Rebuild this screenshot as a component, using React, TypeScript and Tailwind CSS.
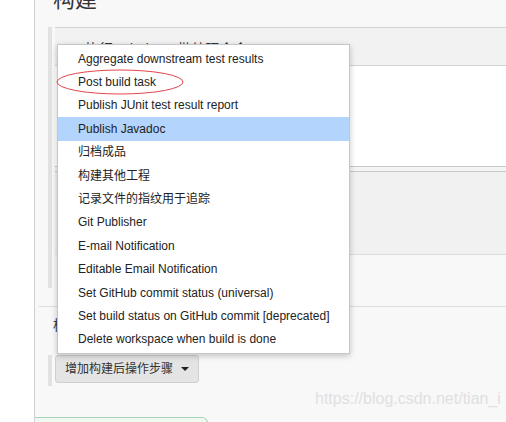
const items = [
  "Aggregate downstream test results",
  "Post build task",
  "Publish JUnit test result report",
  "Publish Javadoc",
  "归档成品",
  "构建其他工程",
  "记录文件的指纹用于追踪",
  "Git Publisher",
  "E-mail Notification",
  "Editable Email Notification",
  "Set GitHub commit status (universal)",
  "Set build status on GitHub commit [deprecated]",
  "Delete workspace when build is done",
]

const font = "font-['Liberation_Sans',Arial,'Noto_Sans_CJK_SC',sans-serif]"

function DragHandle() {
  return (
    <svg width="11" height="7" viewBox="0 0 11 7" className="shrink-0">
      {[0, 1, 2].map((r) =>
        [0, 1, 2, 3, 4].map((c) => (
          <rect key={`${r}-${c}`} x={c * 2 + 1} y={r * 2 + 1} width="1" height="1" fill="#c8c8c8" />
        ))
      )}
    </svg>
  )
}

export default function App() {
  return (
    <div className={`relative w-[506px] h-[422px] overflow-hidden flex bg-white ${font}`}>
      {/* left gutter */}
      <div className="w-[34px] shrink-0 bg-white" />

      {/* main area */}
      <div className="flex-1 border-l border-[#d0d0d0] bg-[#f8f8f8]">
        {/* title */}
        <div className="h-[27px] pl-[18px] overflow-hidden">
          <div className="mt-[-11px] text-[22px] leading-none text-[#333]">构建</div>
        </div>

        {/* build step */}
        <div className="flex h-[261px]">
          <div className="ml-[13px] w-[4px] bg-[#e2e2e2]" />
          <div className="ml-[3px] flex-1 flex flex-col">
            <div className="h-[39px] shrink-0 flex items-center gap-[7px] pl-[12px] bg-[#f2f2f2] border-t border-b border-[#d2d2d2]">
              <DragHandle />
              <span className="text-[14px] text-[#333] mt-[5px]">执行 Windows 批处理命令</span>
            </div>
            <div className="h-[100px] shrink-0 bg-white" />
            <div className="h-[6px] shrink-0 border-t border-b border-[#c8c8c8] bg-[#f5f5f5]" />
            <div className="h-[83px] shrink-0 bg-[#f1f1f1] border-b border-[#dcdcdc]" />
            <div className="flex-1" />
          </div>
        </div>

        <div className="h-[18px]" />
        <div className="ml-[4px] border-t border-[#dddddd]" />

        {/* post build section */}
        <div className="pl-[18px] pt-[8px] h-[48px] text-[14px] text-[#333]">构建后操作</div>

        <div className="flex items-stretch h-[31px]">
          <div className="ml-[13px] w-[4px] bg-[#e2e2e2]" />
          <div className="ml-[3px]">
            <button className="h-[28px] px-[9px] flex items-center gap-[8px] bg-[#e4e4e4] border border-[#cfcfcf] rounded-[3px] text-[12px] text-[#333]">
              <span>增加构建后操作步骤</span>
              <svg width="8" height="4" viewBox="0 0 8 4">
                <path d="M0 0 L8 0 L4 4 Z" fill="#222" />
              </svg>
            </button>
          </div>
        </div>

        <div className="h-[31px]" />
        <div className="w-[173px] h-[20px] bg-[#f0f8f1] border border-l-0 border-[#aad4b8] rounded-tr-[6px]" />
      </div>

      {/* watermark */}
      <div className="absolute left-[315px] top-[391px] text-[16px] text-[#e0e0e0] leading-none whitespace-nowrap">
        https://blog.csdn.net/tian_i
      </div>

      {/* dropdown menu */}
      <div className="absolute left-[57px] top-[44px] w-[293px] h-[310px] bg-white border border-[#c6c6c6] shadow-[0_2px_6px_rgba(0,0,0,0.22)] py-[2px]">
        {items.map((label) => (
          <div
            key={label}
            className={`h-[23.4px] flex items-center pl-[20px] text-[12px] text-[#222] whitespace-nowrap ${
              label === "Publish Javadoc" ? "bg-[#b3d4fd]" : ""
            }`}
          >
            {label}
          </div>
        ))}
      </div>

      {/* red annotation ellipse */}
      <svg className="absolute left-[55px] top-[68px]" width="130" height="28" viewBox="0 0 130 28">
        <ellipse cx="65" cy="14" rx="63" ry="12" fill="none" stroke="#e2454a" strokeWidth="1" />
      </svg>
    </div>
  )
}
